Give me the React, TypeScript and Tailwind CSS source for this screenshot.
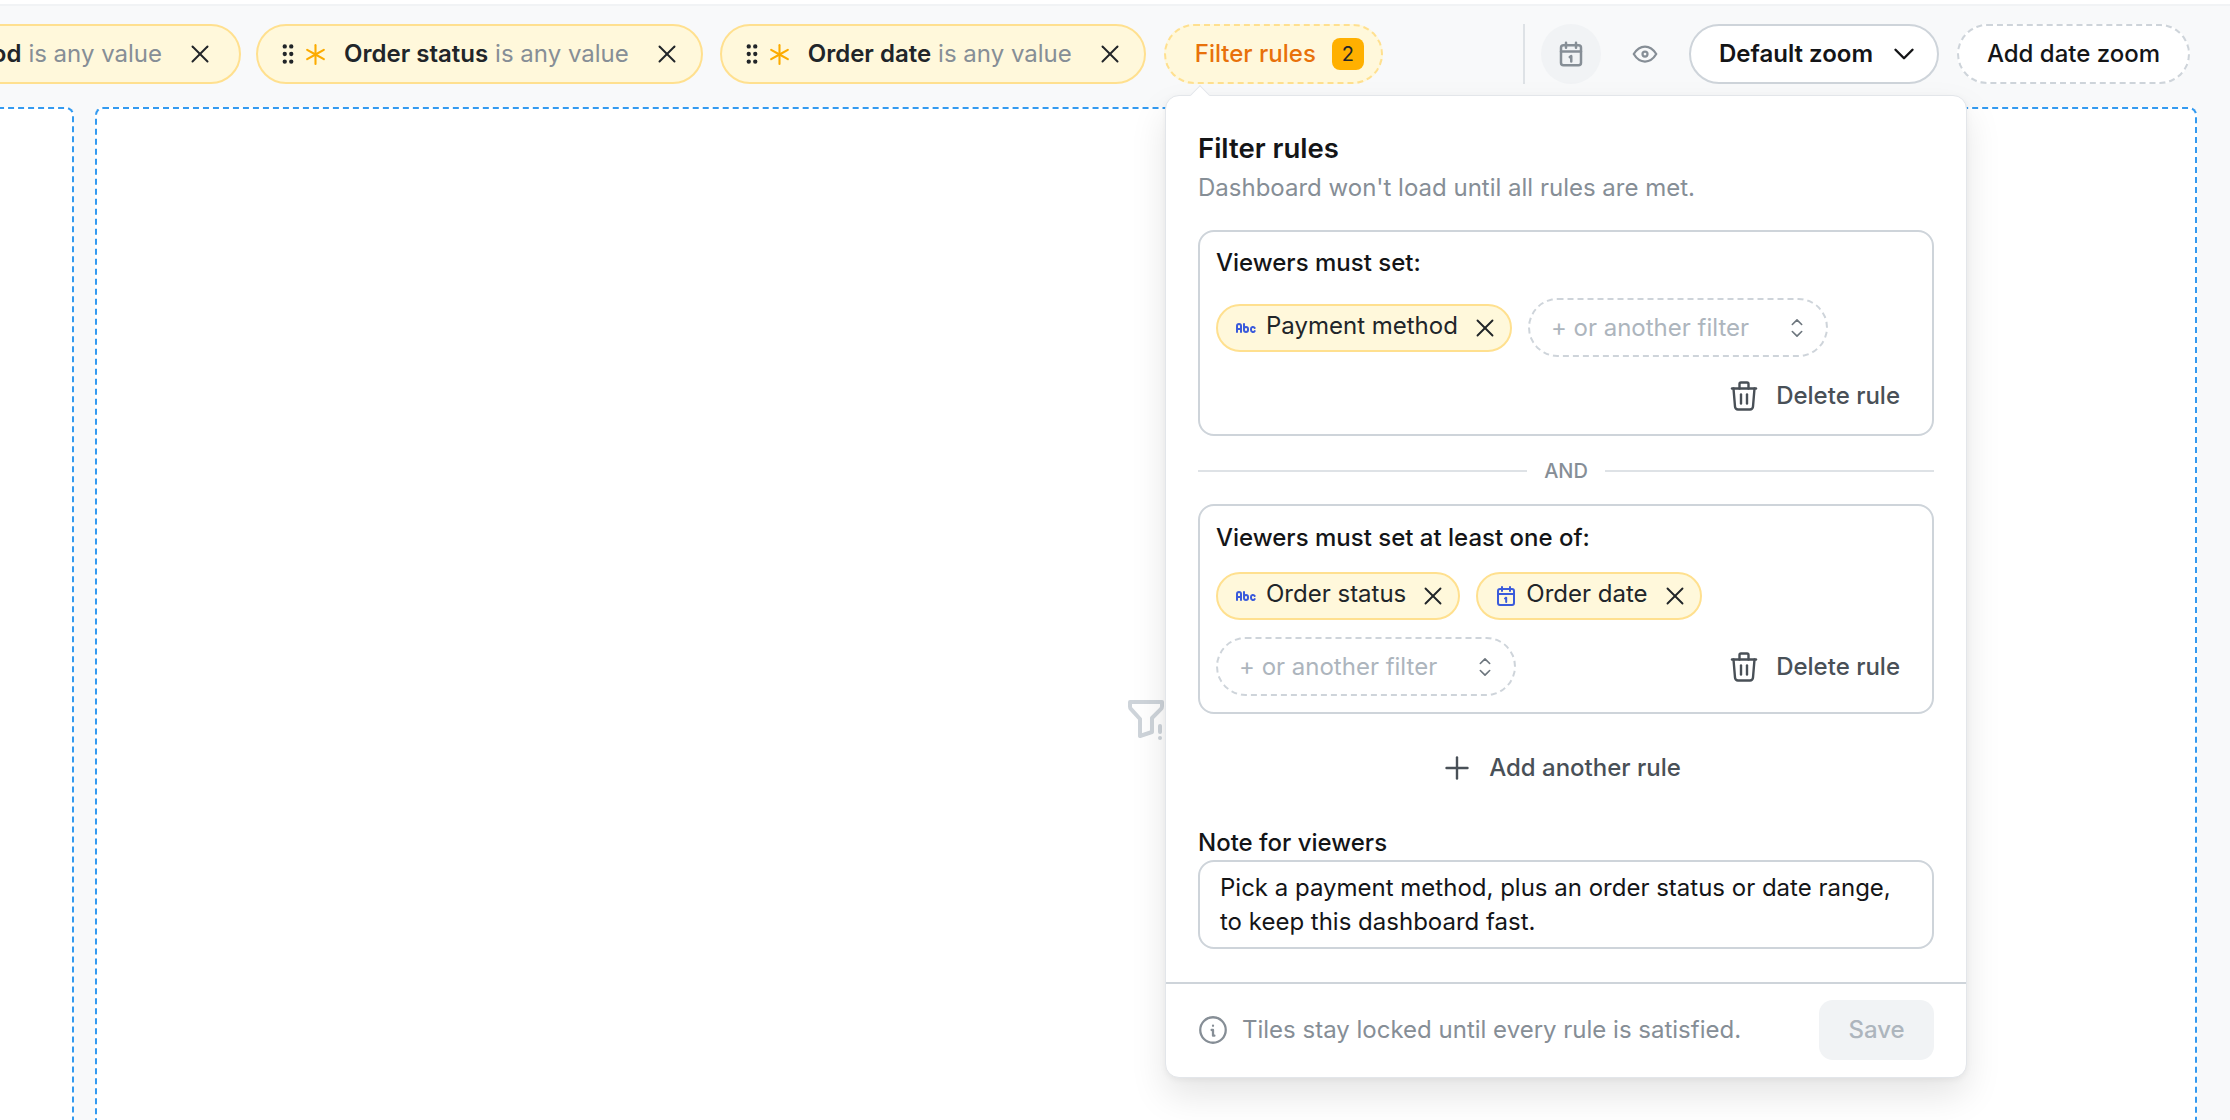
import {
  TbAbc,
  TbAsterisk,
  TbChevronDown,
  TbEye,
  TbFilterExclamation,
  TbGripVertical,
  TbInfoCircle,
  TbPlus,
  TbSelector,
  TbTrash,
  TbX,
} from "react-icons/tb";

function CalendarOne({ className }: { className?: string }) {
  return (
    <svg viewBox="0 0 24 24" fill="none" stroke="currentColor" strokeWidth={2} strokeLinecap="round" strokeLinejoin="round" className={className}>
      <rect x="4" y="5" width="16" height="16" rx="2" />
      <path d="M16 3v4M8 3v4M4 10h16" />
      <path d="M11 14.5l1.2-.8v4.3" />
    </svg>
  );
}

function ToolbarChip({ name, first }: { name: string; first?: boolean }) {
  return (
    <div className={`flex h-[60px] shrink-0 items-center rounded-full border-2 border-[#ffe08f] bg-[#fff8db] pl-[17px] ${first ? "-ml-[263px] -mr-[2px] pr-[24px]" : "pr-[19px]"}`}>
      <TbGripVertical className="h-[26px] w-[26px] text-[#212529]" />
      <TbAsterisk className="ml-[2px] h-[25px] w-[25px] text-[#fcab00]" />
      <span className="ml-[16px] font-semibold text-[#212529]">{name}</span>
      <span className="ml-[7px] text-[#868e96]">is any value</span>
      <TbX strokeWidth={1.6} className="ml-[23px] h-[30px] w-[30px] text-[#212529]" />
    </div>
  );
}

function FieldChip({ name, date }: { name: string; date?: boolean }) {
  return (
    <div className="flex h-[48px] items-center rounded-full border-2 border-[#ffe08f] bg-[#fff8db] pl-[16px] pr-[10px]">
      {date ? (
        <CalendarOne className="h-[24px] w-[24px] text-[#3b5bdb]" />
      ) : (
        <TbAbc className="h-[24px] w-[24px] text-[#3b5bdb]" />
      )}
      <span className="ml-[8px] -translate-y-[2px] text-[#212529]">{name}</span>
      <TbX strokeWidth={1.5} className="ml-[12px] h-[30px] w-[30px] text-[#212529]" />
    </div>
  );
}

function AnotherFilter() {
  return (
    <div className="flex h-[59px] w-[300px] items-center justify-between rounded-full border-2 border-dashed border-[#ced4da] pl-[21px] pr-[15px] text-[#adb5bd]">
      <span>+ or another filter</span>
      <TbSelector strokeWidth={1.4} className="h-[28px] w-[28px] text-[#6c757d]" />
    </div>
  );
}

function DeleteRule() {
  return (
    <div className="flex h-[34px] items-center pr-[32px] text-[#495057]">
      <TbTrash strokeWidth={1.6} className="h-[36px] w-[36px]" />
      <span className="ml-[14px] font-medium">Delete rule</span>
    </div>
  );
}

function FilterRulesPopover() {
  return (
    <div className="absolute left-[1165px] top-[95px] flex w-[802px] flex-col rounded-[14px] border border-[#e3e6ea] bg-white leading-[34px] shadow-[0_18px_36px_rgba(0,0,0,0.1),0_2px_6px_rgba(0,0,0,0.05)]">
      <div className="absolute -top-[8px] left-[27px] h-[14px] w-[14px] rotate-45 border-l border-t border-[#e3e6ea] bg-white" />
      <div className="relative flex flex-col px-[32px] pt-[34px]">
        <div className="text-[27.5px] font-semibold leading-[36px] text-[#141517]">Filter rules</div>
        <div className="mt-[5px] text-[#868e96]">Dashboard won't load until all rules are met.</div>

        <div className="mt-[25px] rounded-[16px] border-2 border-[#ced4da] pb-[21px] pl-[16px] pt-[14px]">
          <div className="font-medium text-[#141517]">Viewers must set:</div>
          <div className="mt-[18px] flex items-center gap-[16px]">
            <FieldChip name="Payment method" />
            <AnotherFilter />
          </div>
          <div className="mt-[22px] flex justify-end">
            <DeleteRule />
          </div>
        </div>

        <div className="mt-[18px] flex items-center gap-[17px] font-medium text-[#868e96]">
          <div className="h-[2px] flex-1 bg-[#dee2e6]" />
          <span className="text-[20px]">AND</span>
          <div className="h-[2px] flex-1 bg-[#dee2e6]" />
        </div>

        <div className="mt-[16px] rounded-[16px] border-2 border-[#ced4da] pb-[16px] pl-[16px] pt-[15px]">
          <div className="font-medium text-[#141517]">Viewers must set at least one of:</div>
          <div className="mt-[17px] flex items-center gap-[16px]">
            <FieldChip name="Order status" />
            <FieldChip name="Order date" date />
          </div>
          <div className="mt-[17px] flex items-center justify-between">
            <AnotherFilter />
            <DeleteRule />
          </div>
        </div>

        <div className="mt-[37px] flex h-[34px] items-center justify-center pr-[12px] font-medium text-[#495057]">
          <TbPlus strokeWidth={1.6} className="h-[36px] w-[36px]" />
          <span className="ml-[14px]">Add another rule</span>
        </div>

        <div className="mt-[41px] font-medium text-[#141517]">Note for viewers</div>
        <div className="rounded-[16px] border-2 border-[#ced4da] px-[20px] pb-[8px] pt-[9px] text-[#141517]">
          Pick a payment method, plus an order status or date range, to keep this dashboard fast.
        </div>
      </div>

      <div className="mt-[33px] flex items-center justify-between border-t-2 border-[#ced4da] px-[32px] pb-[17px] pt-[16px]">
        <div className="flex items-center text-[#868e96]">
          <TbInfoCircle strokeWidth={1.6} className="-ml-[2px] h-[34px] w-[34px]" />
          <span className="ml-[12px]">Tiles stay locked until every rule is satisfied.</span>
        </div>
        <div className="flex h-[60px] w-[115px] items-center justify-center rounded-[14px] bg-[#f1f3f5] font-medium text-[#adb5bd]">Save</div>
      </div>
    </div>
  );
}

export default function App() {
  return (
    <div className="relative h-[1120px] w-[2230px] overflow-hidden bg-[#f8f9fa] font-[Inter,sans-serif] text-[24px]">
      <div className="h-[6px] border-b-2 border-[#f1f3f5] bg-white" />

      <div className="flex items-center justify-between pr-[40px] pt-[18px]">
        <div className="flex items-center gap-[17px]">
          <ToolbarChip name="Payment method" first />
          <ToolbarChip name="Order status" />
          <ToolbarChip name="Order date" />
          <div className="ml-[1px] flex h-[60px] items-center rounded-full border-2 border-dashed border-[#ffe08f] bg-[#fff8db] pl-[29px] pr-[17px]">
            <span className="font-medium text-[#e8710a]">Filter rules</span>
            <span className="ml-[16px] flex h-[32px] w-[32px] items-center justify-center rounded-[8px] bg-[#ffb000] text-[20px] text-[#212529]">2</span>
          </div>
        </div>
        <div className="flex items-center">
          <div className="h-[60px] w-[2px] bg-[#dee2e6]" />
          <div className="ml-[16px] flex h-[60px] w-[60px] items-center justify-center rounded-full bg-[#f1f3f5]">
            <CalendarOne className="h-[30px] w-[30px] text-[#868e96]" />
          </div>
          <div className="flex h-[60px] w-[88px] items-center justify-center">
            <TbEye strokeWidth={1.8} className="h-[30px] w-[30px] text-[#868e96]" />
          </div>
          <div className="flex h-[60px] w-[250px] items-center justify-between rounded-full border-2 border-[#ced4da] bg-white pl-[28px] pr-[16px] font-semibold text-[#141517]">
            <span>Default zoom</span>
            <TbChevronDown strokeWidth={1.7} className="h-[34px] w-[34px]" />
          </div>
          <div className="ml-[18px] flex h-[60px] w-[233px] items-center justify-center rounded-full border-2 border-dashed border-[#ced4da] bg-white font-medium text-[#141517]">
            Add date zoom
          </div>
        </div>
      </div>

      <div className="mt-[23px] flex gap-[21px]">
        <div className="-ml-[200px] h-[1222px] w-[274px] shrink-0 rounded-[8px] border-2 border-dashed border-[#339af0] bg-white" />
        <div className="flex h-[1222px] w-[2102px] shrink-0 items-center justify-center rounded-[8px] border-2 border-dashed border-[#339af0] bg-white">
          <TbFilterExclamation className="h-[48px] w-[48px] text-[#ced4da]" />
        </div>
      </div>

      <FilterRulesPopover />
    </div>
  );
}
